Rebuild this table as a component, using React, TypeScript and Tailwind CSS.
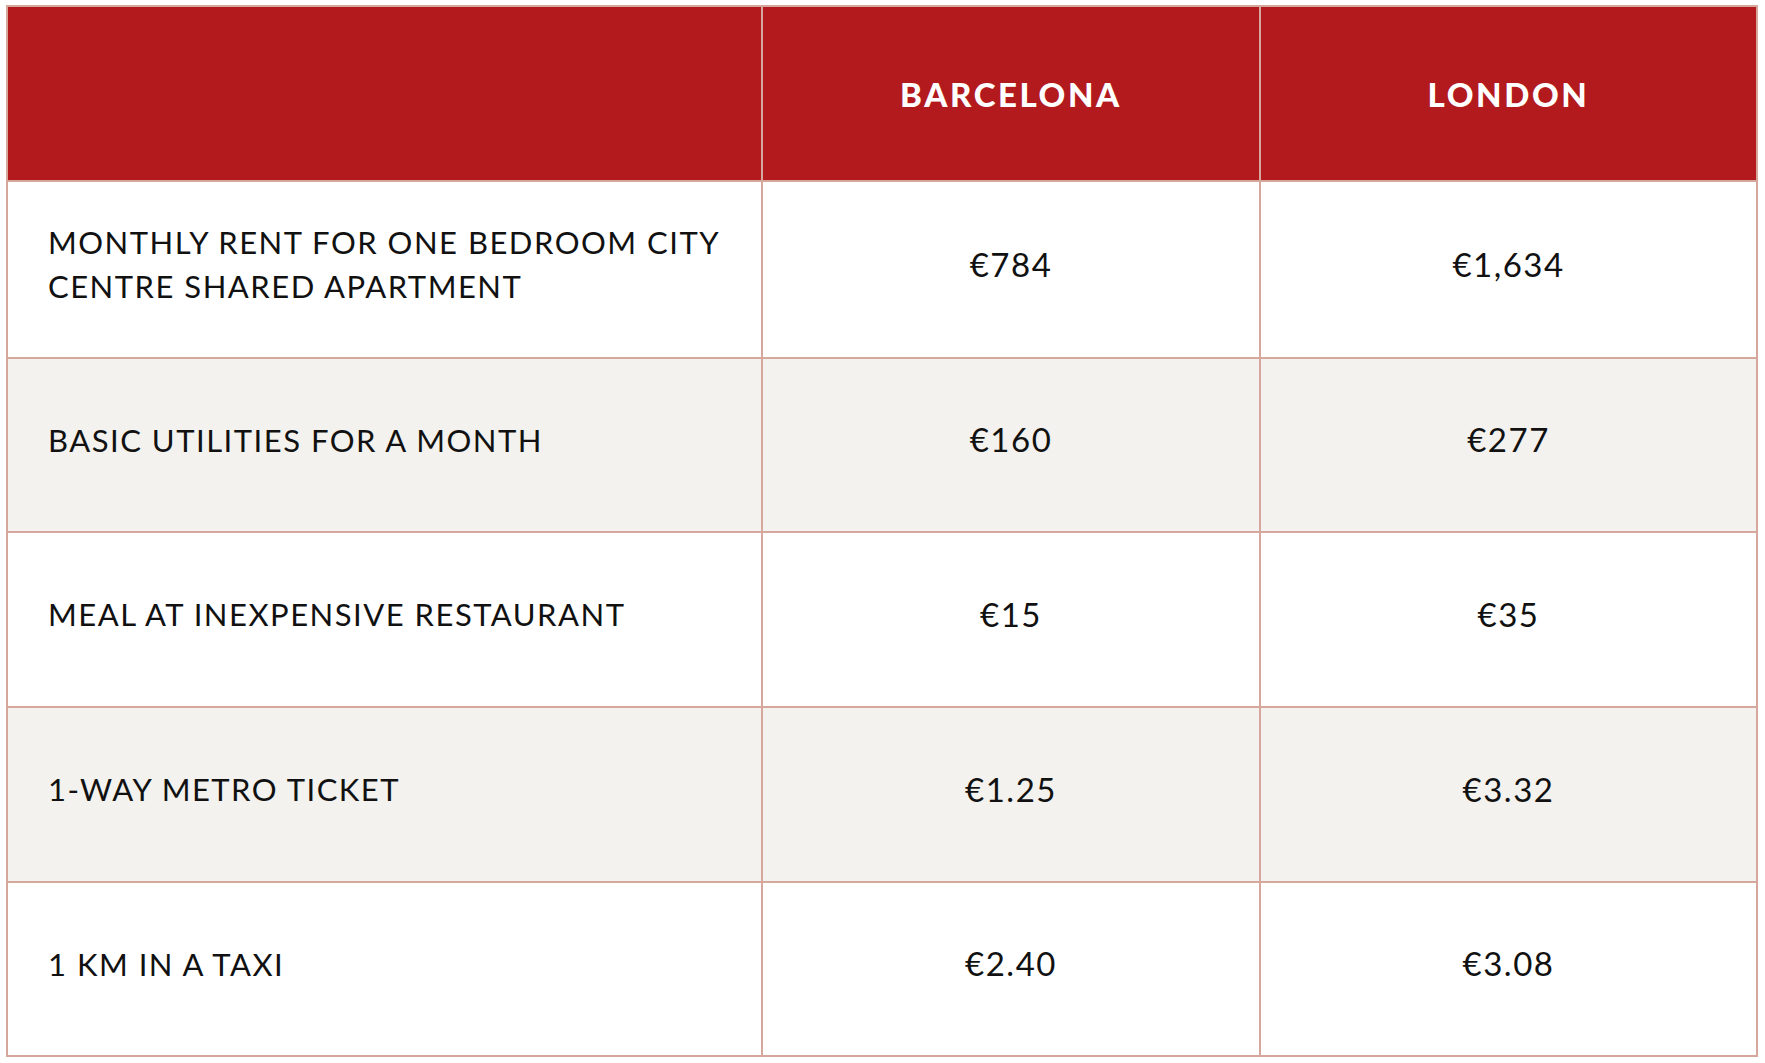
import React from "react";

const rows = [
  { label: ["MONTHLY RENT FOR ONE BEDROOM CITY", "CENTRE SHARED APARTMENT"], b: "€784", l: "€1,634", alt: false, h: "h-[177px]" },
  { label: ["BASIC UTILITIES FOR A MONTH"], b: "€160", l: "€277", alt: true, h: "h-[174px]" },
  { label: ["MEAL AT INEXPENSIVE RESTAURANT"], b: "€15", l: "€35", alt: false, h: "h-[175px]" },
  { label: ["1-WAY METRO TICKET"], b: "€1.25", l: "€3.32", alt: true, h: "h-[175px]" },
  { label: ["1 KM IN A TAXI"], b: "€2.40", l: "€3.08", alt: false, h: "h-[174px]" },
];

export default function App() {
  return (
    <div className="w-[1765px] h-[1063px] bg-white pl-[6px] pt-[5px] font-['Lato',sans-serif]">
      <div className="w-[1752px] border-l-2 border-t-2 border-[#d6a79c] grid grid-cols-[755px_498px_497px]">
        <div className="h-[175px] bg-[#b31a1e] border-r-2 border-b-2 border-[#d6a79c]" />
        <div className="h-[175px] bg-[#b31a1e] border-r-2 border-b-2 border-[#d6a79c] flex items-center justify-center text-white font-black text-[33px] tracking-[2.6px] pt-[2px]">
          BARCELONA
        </div>
        <div className="h-[175px] bg-[#b31a1e] border-r-2 border-b-2 border-[#d6a79c] flex items-center justify-center text-white font-black text-[33px] tracking-[2.6px] pt-[2px]">
          LONDON
        </div>
        {rows.map((r, i) => {
          const bg = r.alt ? "bg-[#f3f2ee]" : "bg-white";
          return (
            <React.Fragment key={i}>
              <div className={`${r.h} ${bg} border-r-2 border-b-2 border-[#d6a79c] flex flex-col justify-center pl-[40px] pb-[11px] text-[#111111] text-[31px] leading-[44px] tracking-[1.5px]`}>
                {r.label.map((t, j) => (
                  <div key={j}>{t}</div>
                ))}
              </div>
              <div className={`${r.h} ${bg} border-r-2 border-b-2 border-[#d6a79c] flex items-center justify-center pb-[10px] text-[#111111] text-[33px] tracking-[1.5px]`}>
                {r.b}
              </div>
              <div className={`${r.h} ${bg} border-r-2 border-b-2 border-[#d6a79c] flex items-center justify-center pb-[10px] text-[#111111] text-[33px] tracking-[1.5px]`}>
                {r.l}
              </div>
            </React.Fragment>
          );
        })}
      </div>
    </div>
  );
}
